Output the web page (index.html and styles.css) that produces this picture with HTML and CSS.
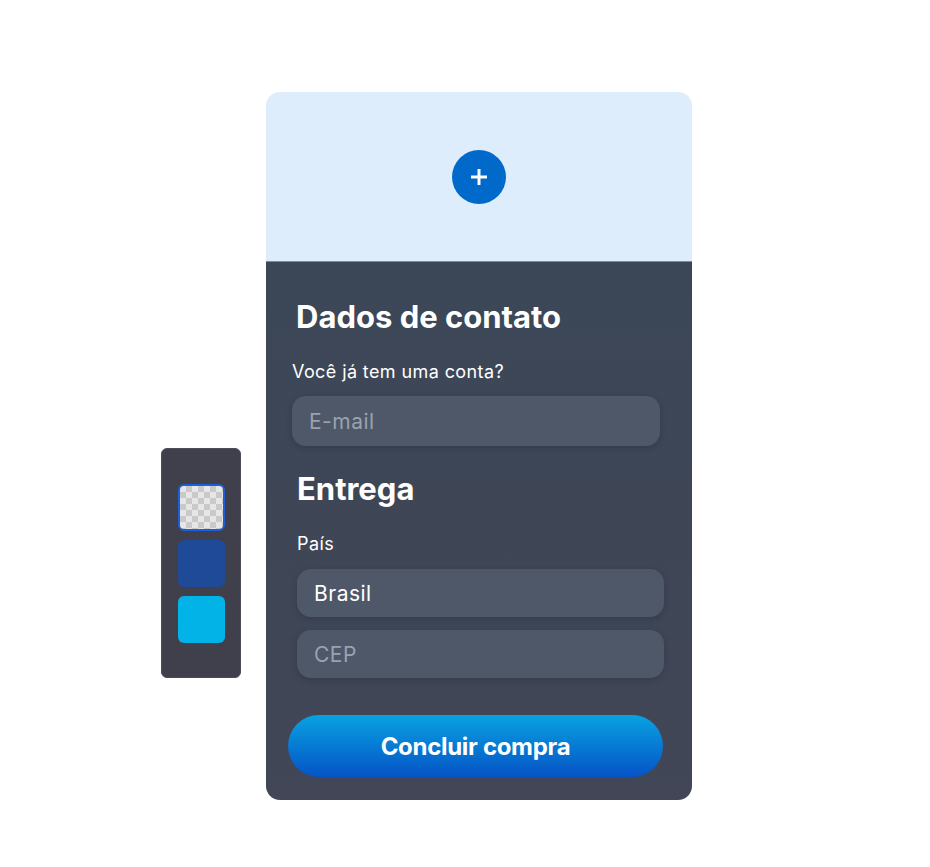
FILE: index.html
```html
<!DOCTYPE html>
<html lang="pt-BR">
<head>
  <meta charset="UTF-8">
  <title>Checkout</title>
  <link rel="stylesheet" href="styles.css">
</head>
<body>
<div class="stage">
  <!-- paleta de cores -->
  <div class="palette">
    <span class="swatch swatch-clear"></span>
    <span class="swatch swatch-navy"></span>
    <span class="swatch swatch-sky"></span>
  </div>

  <div class="card">
    <div class="card-top">
      <button class="add-btn" type="button">
        <svg width="18" height="18" viewBox="0 0 18 18"><path d="M9 1v16M1 9h16" stroke="#fff" stroke-width="3"/></svg>
      </button>
    </div>
    <div class="card-body">
      <div class="section contact">
        <h2>Dados de contato</h2>
        <p class="label">Você já tem uma conta?</p>
        <div class="field placeholder">E-mail</div>
      </div>
      <div class="section delivery">
        <h2>Entrega</h2>
        <p class="label">País</p>
        <div class="field">Brasil</div>
        <div class="field placeholder">CEP</div>
      </div>
      <button class="buy-btn" type="button">Concluir compra</button>
    </div>
  </div>
</div>
</body>
</html>
```

FILE: styles.css
```css
*{
    margin: 0;
    padding: 0;
    box-sizing: border-box;
}
body{
    background: #fff;
    font-family: Inter, "Noto Sans", sans-serif;
}
.stage{
    display: flex;
    align-items: flex-start;
    gap: 25px;
    padding: 92px 0 0 161px;
}
.palette{
    margin-top: 356px;
    width: 80px;
    height: 230px;
    background: #3f404c;
    border: 1px solid #4a4c5c;
    border-radius: 6px;
    display: flex;
    flex-direction: column;
    align-items: center;
    gap: 9px;
    padding-top: 35px;
}
.swatch{
    display: block;
    width: 47px;
    height: 47px;
    border-radius: 6px;
}
.swatch-clear{
    border: 2px solid #1d5fd8;
    background-color: #e6e6e6;
    background-image: conic-gradient(#c9c9c9 25%, transparent 0 50%, #c9c9c9 0 75%, transparent 0);
    background-size: 12px 12px;
}
.swatch-navy{
    background: #1e4a97;
}
.swatch-sky{
    background: #01b3e6;
}
.card{
    width: 426px;
    height: 708px;
    border-radius: 14px;
    overflow: hidden;
    display: flex;
    flex-direction: column;
}
.card-top{
    height: 170px;
    background: #deedfb;
    display: flex;
    align-items: center;
    justify-content: center;
    border-bottom: 1px solid #7a8aa0;
}
.add-btn{
    width: 54px;
    height: 54px;
    border-radius: 50%;
    border: none;
    background: #0069c9;
    display: flex;
    align-items: center;
    justify-content: center;
}
.card-body{
    flex: 1;
    background: linear-gradient(#3b4757, #424656);
    padding: 37px 0 0 0;
    color: #fff;
}
.section h2{
    font-size: 31px;
    font-weight: 700;
    line-height: 36px;
}
.label{
    font-size: 18px;
    letter-spacing: 0.4px;
    line-height: 22px;
}
.field{
    height: 50px;
    border-radius: 14px;
    background: #4e5869;
    box-shadow: 0 2px 6px rgba(20, 26, 38, 0.25);
    display: flex;
    align-items: center;
    padding-left: 17px;
    font-size: 21px;
    letter-spacing: 0.5px;
    color: #fff;
}
.field.placeholder{
    color: #9aa2ae;
}
.contact{
    padding: 0 32px 0 26px;
}
.contact h2{
    padding-left: 4px;
    margin-bottom: 26px;
}
.contact .label{
    margin-bottom: 13px;
}
.delivery{
    padding: 25px 28px 0 31px;
}
.delivery h2{
    margin-bottom: 26px;
}
.delivery .label{
    margin-bottom: 14px;
}
.delivery .field{
    height: 48px;
    margin-bottom: 13px;
}
.buy-btn{
    display: block;
    margin: 37px 0 0 22px;
    width: 375px;
    height: 62px;
    border: none;
    border-radius: 31px;
    background: linear-gradient(#08a2e2, #0553c5);
    color: #fff;
    font-family: Inter, "Noto Sans", sans-serif;
    font-size: 24px;
    font-weight: 700;
    letter-spacing: -0.3px;
}
```
